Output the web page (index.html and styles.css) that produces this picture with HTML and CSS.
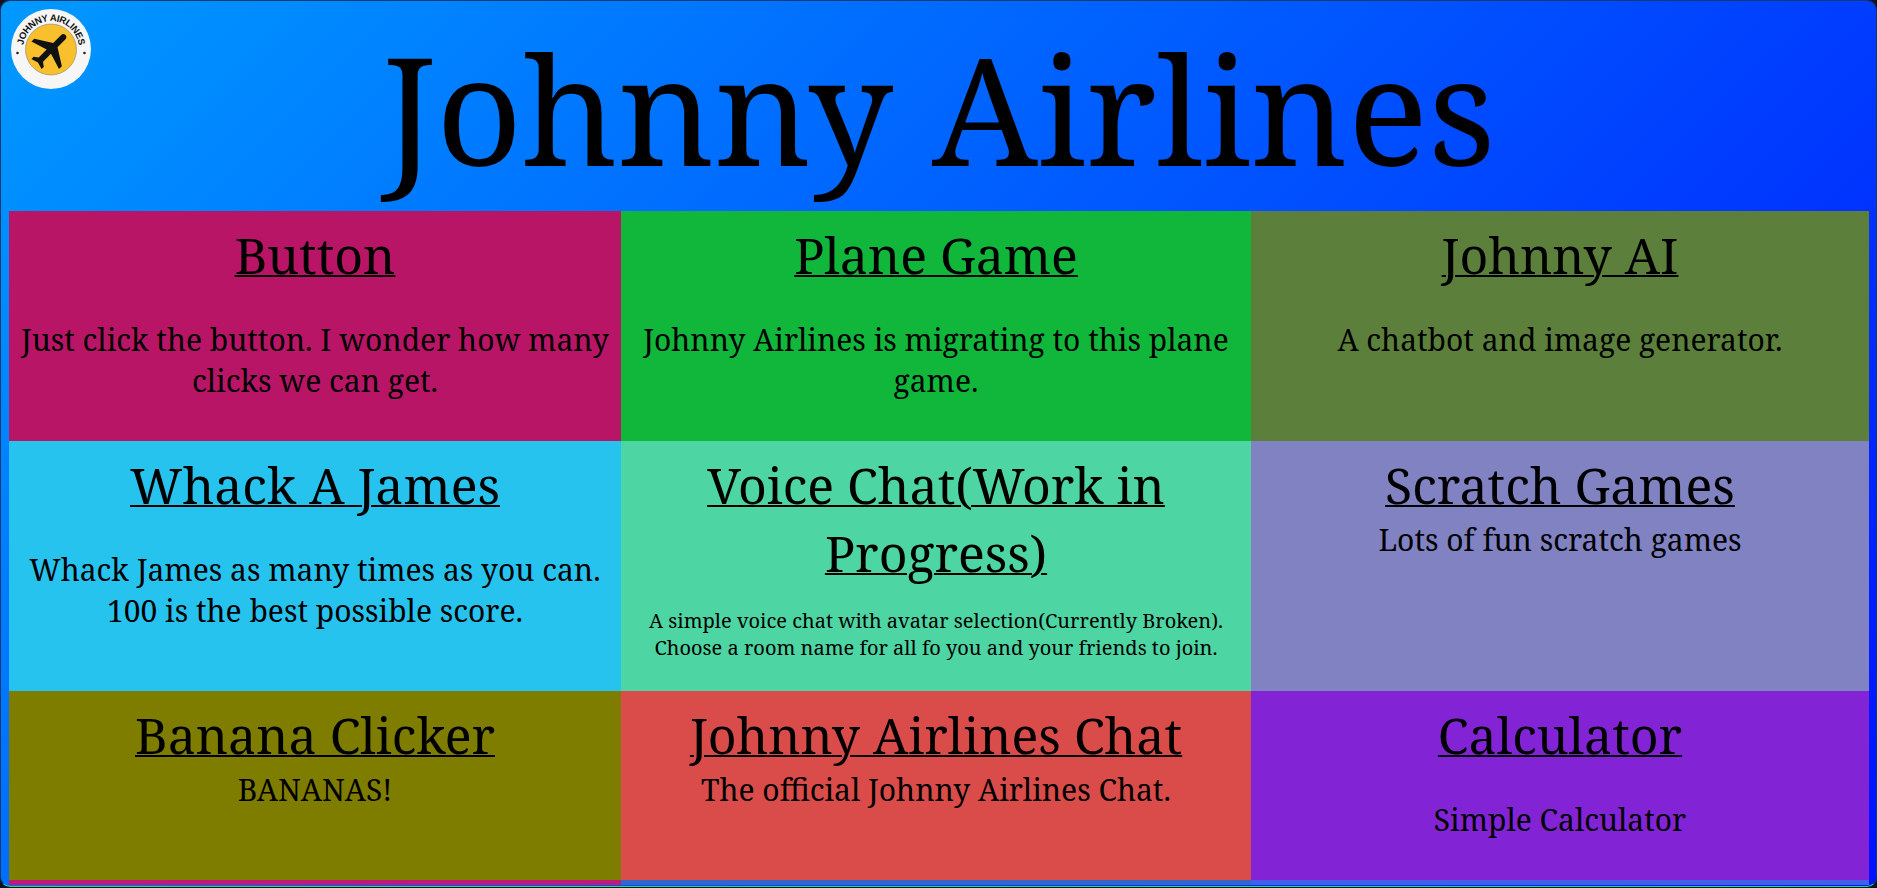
FILE: index.html
```html
<!DOCTYPE html>
<html lang="en">
<head>
    <meta charset="UTF-8">
    <meta name="viewport" content="width=device-width, initial-scale=1.0">
    <title>Johnny Airlines</title>
    <link rel="stylesheet" href="styles.css">
</head>
<body>
    <div class="page">
        <svg class="logo" viewBox="0 0 80 80" aria-label="Johnny Airlines logo">
            <circle cx="40" cy="40" r="40" fill="#f6f6f6"/>
            <circle cx="40" cy="40.5" r="25.5" fill="#f7c02c" stroke="#8a8270" stroke-width="0.6"/>
            <defs>
                <path id="logoArc" d="M12 40 A28 28 0 1 1 68 40"/>
            </defs>
            <text class="logo-text"><textPath href="#logoArc" startOffset="50%" text-anchor="middle">JOHNNY AIRLINES</textPath></text>
            <circle cx="6.5" cy="44" r="1.3" fill="#222"/>
            <circle cx="73.5" cy="44" r="1.3" fill="#222"/>
            <g transform="translate(40 40.5) rotate(45) scale(2.05) translate(-11.5 -12)">
                <path fill="#111" d="M21 16v-2l-8-5V3.5c0-.83-.67-1.5-1.5-1.5S10 2.67 10 3.5V9l-8 5v2l8-2.5V19l-2 1.5V22l3.5-1 3.5 1v-1.5L13 19v-5.5l8 2.5z"/>
            </g>
        </svg>

        <h1 class="title">Johnny Airlines</h1>

        <div class="grid">
            <div class="card c-button">
                <a href="#">Button</a>
                <p>Just click the button. I wonder how many clicks we can get.</p>
            </div>
            <div class="card c-plane">
                <a href="#">Plane Game</a>
                <p>Johnny Airlines is migrating to this plane game.</p>
            </div>
            <div class="card c-ai">
                <a href="#">Johnny AI</a>
                <p>A chatbot and image generator.</p>
            </div>
            <div class="card c-whack">
                <a href="#">Whack A James</a>
                <p>Whack James as many times as you can. 100 is the best possible score.</p>
            </div>
            <div class="card c-voice">
                <a href="#">Voice Chat(Work in Progress)</a>
                <p class="small">A simple voice chat with avatar selection(Currently Broken). Choose a room name for all fo you and your friends to join.</p>
            </div>
            <div class="card c-scratch">
                <a href="#">Scratch Games</a>
                <div>Lots of fun scratch games</div>
            </div>
            <div class="card c-banana">
                <a href="#">Banana Clicker</a>
                <div>BANANAS!</div>
            </div>
            <div class="card c-chat">
                <a href="#">Johnny Airlines Chat</a>
                <div>The official Johnny Airlines Chat.</div>
            </div>
            <div class="card c-calc">
                <a href="#">Calculator</a>
                <p>Simple Calculator</p>
            </div>
            <div class="strip s-left"></div>
            <div class="strip s-mid"></div>
            <div class="strip s-right"></div>
        </div>
    </div>
</body>
</html>
```

FILE: styles.css
```css
body {
    margin: 0;
    background: #0c1424;
    font-family: "Noto Serif", "Droid Serif", serif;
    color: #000;
}
.page {
    position: relative;
    box-sizing: border-box;
    height: 887px;
    padding: 0 7px 0 8px;
    border: 1px solid #123a6e;
    border-bottom-color: #12e09a;
    border-radius: 10px;
    background: linear-gradient(135deg, #0099ff, #0011ff);
}
.logo {
    position: absolute;
    top: 8px;
    left: 10px;
    width: 80px;
    height: 80px;
}
.logo-text {
    font-family: "Liberation Sans", sans-serif;
    font-size: 9.5px;
    font-weight: bold;
    letter-spacing: -0.4px;
    fill: #111;
}
.title {
    box-sizing: border-box;
    margin: 0;
    padding-top: 5px;
    height: 210px;
    font-size: 150px;
    font-weight: normal;
    line-height: 204px;
    text-align: center;
}
.grid {
    display: grid;
    grid-template-columns: 612px 630px 618px;
    grid-template-rows: 230px 250px 189px 5px;
}
.card {
    padding: 10px;
    font-size: 30px;
    text-align: center;
}
.card a {
    display: block;
    font-size: 50px;
    color: #000;
    text-decoration-thickness: 2px;
}
.card p {
    margin: 30px 0;
}
.card p.small {
    margin: 20px 0;
    font-size: 20px;
}
.c-button { background: #b81566; }
.c-plane { background: #10b73b; }
.c-ai { background: #5c803b; }
.c-whack { background: #27c3ef; }
.c-voice { background: #4dd6a3; }
.c-scratch { background: #8082c2; }
.c-banana { background: #7f7d00; }
.c-chat { background: #d94c49; }
.c-calc { background: #8224d6; }
.s-left { background: #c01a78; }
.s-mid { background: #3366c8; }
.s-right { background: #4060e8; }
```
